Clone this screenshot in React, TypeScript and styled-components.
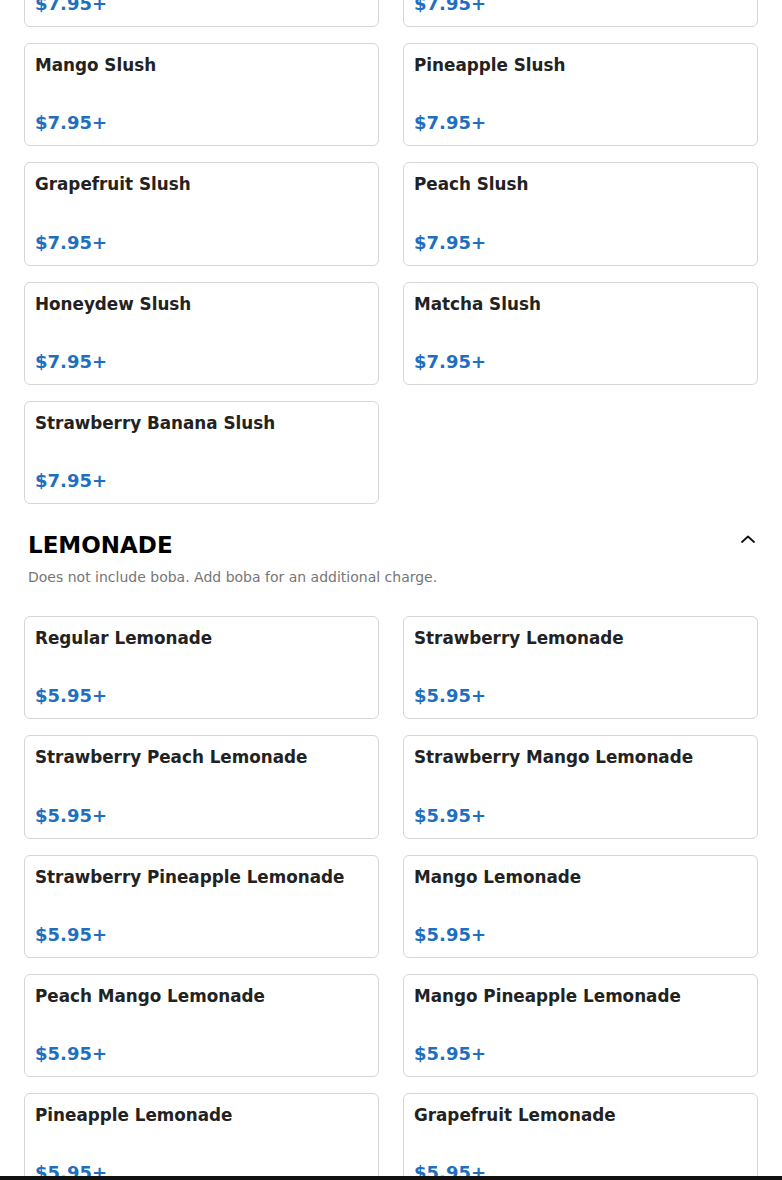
import styled, { createGlobalStyle } from "styled-components";

const GlobalStyle = createGlobalStyle`
  html, body {
    margin: 0;
    padding: 0;
    background: #ffffff;
  }
  body {
    font-family: "DejaVu Sans", Verdana, sans-serif;
    overflow: hidden;
  }
`;

// the page is shown scrolled part-way into the menu
const MenuPage = styled.div`
  margin-top: -76.25px;
  padding: 0 24px;
`;

const Section = styled.section`
  display: flex;
  flex-direction: column;
`;

const SectionHeader = styled.div`
  margin-top: 28px;
  padding: 0 3px 0 4px;
  display: flex;
  justify-content: space-between;
  align-items: flex-start;
`;

const SectionTitle = styled.h2`
  margin: 0;
  font-size: 23px;
  font-weight: 700;
  line-height: normal;
  color: #000000;
`;

const CollapseButton = styled.button`
  margin-top: 3px;
  padding: 0;
  border: none;
  background: none;
  display: flex;
  color: #111111;
`;

const SectionNote = styled.p`
  margin: 11px 0 0;
  padding: 0 4px;
  font-size: 14px;
  line-height: normal;
  color: #767676;
`;

const ItemGrid = styled.div<{ $offset?: number }>`
  margin-top: ${(p) => p.$offset ?? 0}px;
  display: grid;
  grid-template-columns: 1fr 1fr;
  column-gap: 24px;
  row-gap: 16px;
`;

const ItemCard = styled.div`
  box-sizing: border-box;
  height: 103.25px;
  padding: 11px 10px 12px;
  border: 1px solid #d6d6d6;
  border-radius: 6px;
  background: #ffffff;
  display: flex;
  flex-direction: column;
  justify-content: space-between;
`;

const ItemName = styled.div`
  font-size: 16.8px;
  font-weight: 700;
  line-height: normal;
  color: #222222;
`;

const ItemPrice = styled.div`
  font-size: 18px;
  font-weight: 700;
  line-height: normal;
  color: #1e6fc0;
`;

const CartBar = styled.div`
  position: fixed;
  left: 0;
  right: 0;
  bottom: 0;
  height: 4px;
  background: #111111;
`;

const ChevronUp = () => (
  <svg width="14" height="8" viewBox="0 0 14 8" fill="none">
    <path d="M1 7L7 1.5L13 7" stroke="currentColor" strokeWidth="1.8" strokeLinecap="round" strokeLinejoin="round" />
  </svg>
);

const slushItems = [
  "Taro Slush",
  "Strawberry Slush",
  "Mango Slush",
  "Pineapple Slush",
  "Grapefruit Slush",
  "Peach Slush",
  "Honeydew Slush",
  "Matcha Slush",
  "Strawberry Banana Slush",
];

const lemonadeItems = [
  "Regular Lemonade",
  "Strawberry Lemonade",
  "Strawberry Peach Lemonade",
  "Strawberry Mango Lemonade",
  "Strawberry Pineapple Lemonade",
  "Mango Lemonade",
  "Peach Mango Lemonade",
  "Mango Pineapple Lemonade",
  "Pineapple Lemonade",
  "Grapefruit Lemonade",
  "Peach Lemonade",
  "Honeydew Lemonade",
];

interface MenuItemProps {
  name: string;
  price: string;
}

const MenuItem = ({ name, price }: MenuItemProps) => (
  <ItemCard>
    <ItemName>{name}</ItemName>
    <ItemPrice>{price}</ItemPrice>
  </ItemCard>
);

const App = () => {
  return (
    <>
      <GlobalStyle />
      <MenuPage>
        <Section>
          <ItemGrid>
            {slushItems.map((name) => (
              <MenuItem key={name} name={name} price="$7.95+" />
            ))}
          </ItemGrid>
        </Section>
        <Section>
          <SectionHeader>
            <SectionTitle>LEMONADE</SectionTitle>
            <CollapseButton aria-label="Collapse section">
              <ChevronUp />
            </CollapseButton>
          </SectionHeader>
          <SectionNote>Does not include boba. Add boba for an additional charge.</SectionNote>
          <ItemGrid $offset={31}>
            {lemonadeItems.map((name) => (
              <MenuItem key={name} name={name} price="$5.95+" />
            ))}
          </ItemGrid>
        </Section>
      </MenuPage>
      <CartBar />
    </>
  );
};

export default App;
